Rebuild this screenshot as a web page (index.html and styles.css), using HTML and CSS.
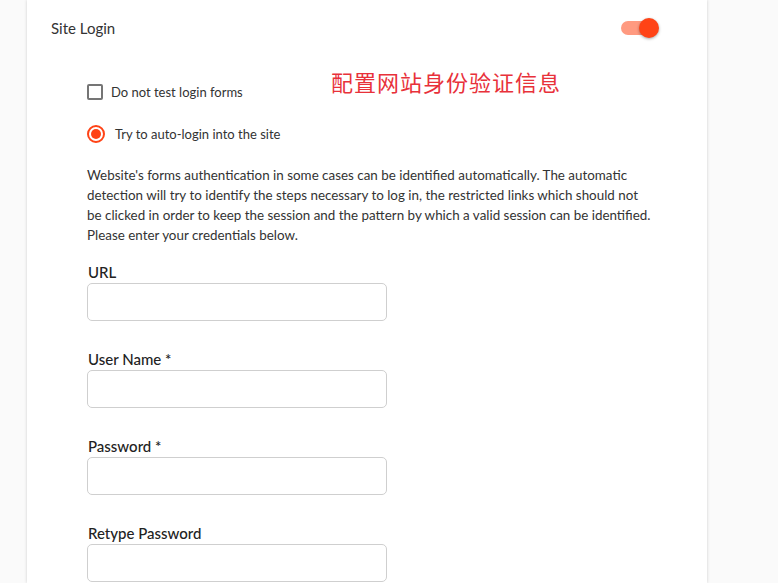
FILE: index.html
```html
<!DOCTYPE html>
<html>
<head>
<meta charset="utf-8">
<link rel="stylesheet" href="styles.css">
</head>
<body>
<div class="card">
  <div class="header">
    <span class="title">Site Login</span>
    <span class="toggle"><span class="track"></span><span class="thumb"></span></span>
  </div>
  <div class="content">
    <div class="note">配置网站身份验证信息</div>
    <div class="option check-row">
      <span class="checkbox"></span>
      <span class="opt-label">Do not test login forms</span>
    </div>
    <div class="option radio-row">
      <span class="radio"><span class="dot"></span></span>
      <span class="opt-label">Try to auto-login into the site</span>
    </div>
    <p class="desc">Website's forms authentication in some cases can be identified automatically. The automatic detection will try to identify the steps necessary to log in, the restricted links which should not be&nbsp;clicked in order to keep the session and the pattern by which a valid session can be identified. Please enter your credentials below.</p>
    <div class="field">
      <label class="field-label">URL</label>
      <input class="input" type="text">
    </div>
    <div class="field">
      <label class="field-label">User Name *</label>
      <input class="input" type="text">
    </div>
    <div class="field">
      <label class="field-label">Password *</label>
      <input class="input" type="password">
    </div>
    <div class="field">
      <label class="field-label">Retype Password</label>
      <input class="input" type="password">
    </div>
  </div>
</div>
</body>
</html>
```
FILE: styles.css
```css
html, body {
  margin: 0;
  padding: 0;
  background: #fafafa;
  font-family: "Lato", "Liberation Sans", sans-serif;
  color: #333;
  overflow: hidden;
}
.card {
  margin-left: 27px;
  width: 680px;
  min-height: 583px;
  background: #fff;
  box-shadow: 0 0 3px rgba(0,0,0,0.18);
}
.header {
  height: 56px;
  display: flex;
  align-items: center;
  justify-content: space-between;
  padding: 0 50px 0 24px;
}
.title {
  font-size: 15px;
  color: #333;
  margin-top: -1px;
}
.toggle {
  position: relative;
  width: 36px;
  height: 20px;
  display: inline-block;
}
.track {
  position: absolute;
  left: 0;
  top: 3px;
  width: 30px;
  height: 14px;
  border-radius: 7px;
  background: #ff9a80;
}
.thumb {
  position: absolute;
  right: -2px;
  top: 0;
  width: 20px;
  height: 20px;
  border-radius: 50%;
  background: #ff4316;
  box-shadow: 0 1px 3px rgba(0,0,0,0.35);
}
.content {
  position: relative;
  padding: 0 0 0 60px;
}
.note {
  position: absolute;
  left: 304px;
  top: -19px;
  font-family: "Noto Sans CJK SC", sans-serif;
  font-size: 22px;
  color: #e8313a;
  letter-spacing: 1px;
}
.option {
  display: flex;
  align-items: center;
  font-size: 13px;
}
.check-row {
  margin-top: 28px;
  height: 16px;
}
.checkbox {
  width: 12px;
  height: 12px;
  border: 2px solid #757575;
  border-radius: 2px;
  margin-right: 8px;
}
.radio-row {
  margin-top: 18px;
  height: 32px;
}
.radio {
  width: 14px;
  height: 14px;
  border: 2px solid #ff4316;
  border-radius: 50%;
  display: flex;
  align-items: center;
  justify-content: center;
  margin-right: 10px;
}
.dot {
  width: 10px;
  height: 10px;
  border-radius: 50%;
  background: #ff4316;
}
.desc {
  margin: 15px 0 0 0;
  width: 570px;
  font-size: 13.4px;
  line-height: 20px;
  color: #333;
}
.field {
  display: flex;
  flex-direction: column;
  margin-top: 17px;
}
.field + .field {
  margin-top: 28px;
}
.field-label {
  font-size: 15px;
  font-weight: 500;
  color: #222;
  margin-left: 1px;
  margin-bottom: 1px;
  line-height: 20px;
}
.input {
  width: 300px;
  height: 38px;
  box-sizing: border-box;
  border: 1px solid #cfcfcf;
  border-radius: 5px;
  margin: 0;
}
```
